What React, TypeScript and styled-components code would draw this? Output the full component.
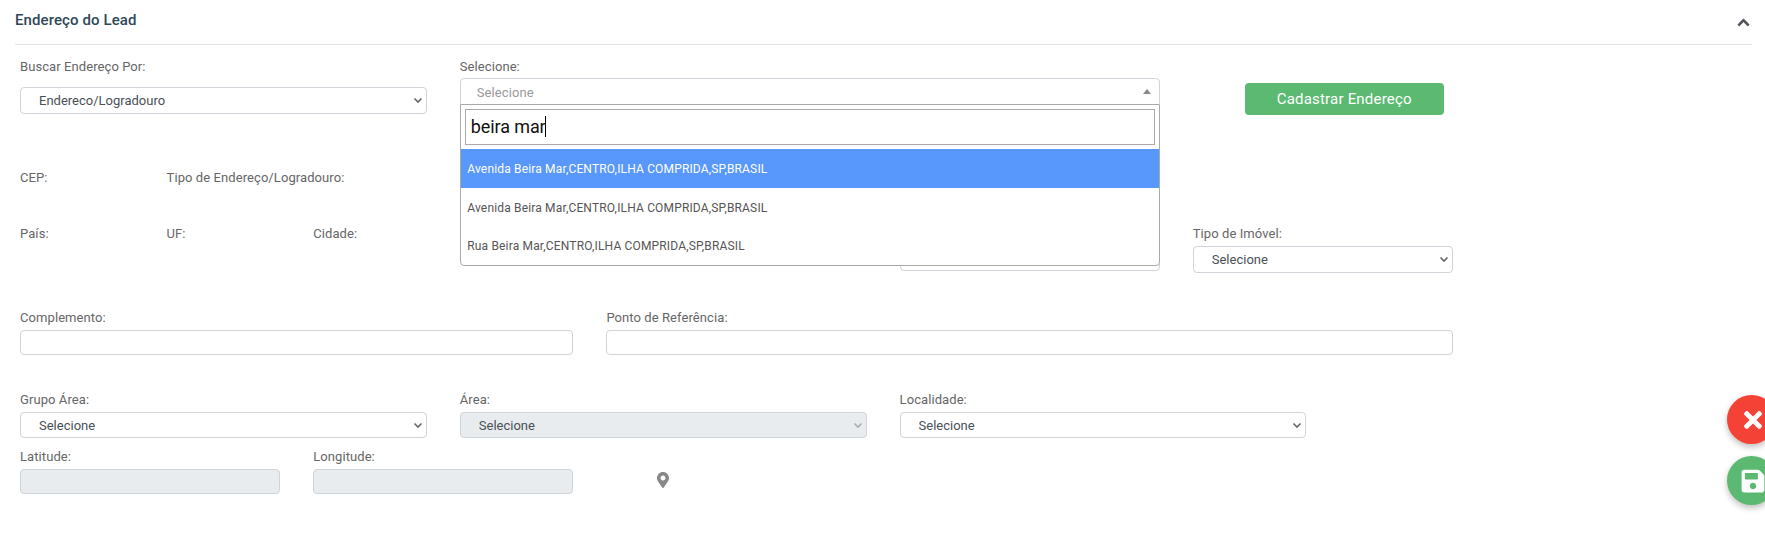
import React from 'react';
import styled, { createGlobalStyle } from 'styled-components';
import { FaChevronUp, FaMapMarkerAlt, FaSave, FaTimes } from 'react-icons/fa';

const chevron = (color: string) =>
  `url("data:image/svg+xml,%3Csvg xmlns='http://www.w3.org/2000/svg' viewBox='0 0 10 7'%3E%3Cpath d='M1.5 1.5l3.5 3.5 3.5-3.5' fill='none' stroke='${color}' stroke-width='1.6'/%3E%3C/svg%3E")`;

const GlobalStyle = createGlobalStyle`
  html, body {
    margin: 0;
    height: 100%;
    overflow: hidden;
    background: #fff;
  }
  body {
    font-family: Roboto, "Liberation Sans", sans-serif;
    font-size: 13px;
    color: #555;
  }
`;

const Section = styled('section')`
  padding: 0 13px 0 15px;
`;

const SectionHeader = styled('header')`
  display: flex;
  align-items: center;
  justify-content: space-between;
  height: 44px;
  padding: 0 2px 0 0;
  border-bottom: 1px solid #dee2e6;
  color: #2f4858;
`;

const SectionTitle = styled('h3')`
  margin: 0 0 5px;
  font-size: 15px;
  line-height: 20px;
  font-weight: 500;
  letter-spacing: 0.1px;
`;

const Collapse = styled('span')`
  display: flex;
  color: #495057;
  font-size: 13px;

  svg {
    stroke: currentColor;
    stroke-width: 30px;
  }
`;

const Row = styled('div')<{ $top: number }>`
  display: grid;
  grid-template-columns: repeat(10, 113.6px);
  column-gap: 33px;
  align-items: start;
  margin: ${(p) => p.$top}px 0 0 5px;
`;

const Field = styled('div')<{ $start: number; $span: number }>`
  grid-column: ${(p) => p.$start} / span ${(p) => p.$span};
  display: flex;
  flex-direction: column;
  min-width: 0;
`;

const Label = styled('label')<{ $gap?: number }>`
  display: block;
  min-height: 15px;
  margin-bottom: ${(p) => p.$gap ?? 5}px;
  font-size: 13px;
  line-height: 15px;
  letter-spacing: 0.08px;
  color: #666;
`;

const Select = styled('select')<{ $height: number }>`
  box-sizing: border-box;
  appearance: none;
  width: 100%;
  height: ${(p) => p.$height}px;
  padding: 0 18px;
  border: 1px solid #ced4da;
  border-radius: 4px;
  background: #fff ${chevron('%23666')} no-repeat right 3px center / 10px 7px;
  color: #495057;
  font-family: inherit;
  font-size: 13px;

  &:disabled {
    background: #e9ecef ${chevron('%23aaa')} no-repeat right 3px center / 10px 7px;
    opacity: 1;
  }
`;

const Input = styled('input')<{ $height?: number }>`
  box-sizing: border-box;
  width: 100%;
  height: ${(p) => p.$height ?? 25}px;
  padding: 0 12px;
  border: 1px solid #ced4da;
  border-radius: 4px;
  background: #fff;

  &:disabled {
    background: #e9ecef;
  }
`;

const ComboWrap = styled('div')`
  position: relative;
`;

const ComboSelection = styled('div')`
  box-sizing: border-box;
  display: flex;
  align-items: center;
  justify-content: space-between;
  height: 27px;
  padding: 2px 8px 0 16px;
  border: 1px solid #ced4da;
  border-radius: 4px 4px 0 0;
  color: #999;
  letter-spacing: 0.08px;
`;

const ComboArrow = styled('span')`
  width: 0;
  height: 0;
  margin-bottom: 2px;
  border-left: 4px solid transparent;
  border-right: 4px solid transparent;
  border-bottom: 5px solid #888;
`;

const ComboPanel = styled('div')`
  position: absolute;
  top: 26px;
  left: 0;
  right: 0;
  z-index: 5;
  box-sizing: border-box;
  height: 162px;
  border: 1px solid #aaa;
  border-radius: 0 0 4px 4px;
  background: #fff;
`;

const ComboSearchWrap = styled('div')`
  padding: 4px;
`;

const ComboSearch = styled('div')`
  box-sizing: border-box;
  display: flex;
  align-items: center;
  height: 36px;
  padding: 0 5px 2px;
  border: 1px solid #aaa;
  color: #111;
  font-size: 18px;
  letter-spacing: -0.1px;
`;

const Caret = styled('span')`
  width: 1px;
  height: 21px;
  margin-left: -1px;
  background: #000;
`;

const ComboOption = styled('div')<{ $active?: boolean }>`
  padding: 13px 6.5px 10.5px;
  font-size: 12px;
  line-height: 15px;
  letter-spacing: 0.16px;
  background: ${(p) => (p.$active ? '#5897fb' : 'transparent')};
  color: ${(p) => (p.$active ? '#fff' : '#555')};
`;

const SaveAddressButton = styled('button')`
  grid-column: 9 / span 2;
  box-sizing: border-box;
  width: 199px;
  height: 32px;
  margin: 24px 0 0 52px;
  border: none;
  border-radius: 4px;
  background: #5cb971;
  color: #fff;
  font-family: inherit;
  font-size: 15px;
  font-weight: 400;
  letter-spacing: 0.2px;
`;

const PinCell = styled('div')`
  grid-column: 5 / span 1;
  display: flex;
  justify-content: center;
  padding-top: 23px;
  color: #888;
  font-size: 16px;
`;

const FabStack = styled('div')`
  position: fixed;
  right: -11px;
  top: 395px;
  display: flex;
  flex-direction: column;
  gap: 12px;
`;

const Fab = styled('button')<{ $color: string; $size: number }>`
  display: flex;
  align-items: center;
  justify-content: center;
  width: 49px;
  height: 49px;
  padding: 0 0 0 3px;
  border: none;
  border-radius: 50%;
  background: ${(p) => p.$color};
  box-shadow: 0 3px 6px rgba(0, 0, 0, 0.25);
  color: #fff;
  font-size: ${(p) => p.$size}px;
`;

const options = [
  'Avenida Beira Mar,CENTRO,ILHA COMPRIDA,SP,BRASIL',
  'Avenida Beira Mar,CENTRO,ILHA COMPRIDA,SP,BRASIL',
  'Rua Beira Mar,CENTRO,ILHA COMPRIDA,SP,BRASIL',
];

const SelectOne = ({ value, height, disabled }: { value: string; height: number; disabled?: boolean }) => (
  <Select $height={height} disabled={disabled} defaultValue={value}>
    <option>{value}</option>
  </Select>
);

export default function App() {
  return (
    <>
      <GlobalStyle />
      <Section>
        <SectionHeader>
          <SectionTitle>Endereço do Lead</SectionTitle>
          <Collapse>
            <FaChevronUp />
          </Collapse>
        </SectionHeader>

        <Row $top={14}>
          <Field $start={1} $span={3}>
            <Label $gap={13}>Buscar Endereço Por:</Label>
            <SelectOne value="Endereco/Logradouro" height={27} />
          </Field>
          <Field $start={4} $span={5}>
            <Label $gap={4}>Selecione:</Label>
            <ComboWrap>
              <ComboSelection>
                Selecione
                <ComboArrow />
              </ComboSelection>
              <ComboPanel>
                <ComboSearchWrap>
                  <ComboSearch>
                    beira mar
                    <Caret />
                  </ComboSearch>
                </ComboSearchWrap>
                {options.map((text, i) => (
                  <ComboOption key={i} $active={i === 0}>
                    {text}
                  </ComboOption>
                ))}
              </ComboPanel>
            </ComboWrap>
          </Field>
          <SaveAddressButton>Cadastrar Endereço</SaveAddressButton>
        </Row>

        <Row $top={55}>
          <Field $start={1} $span={1}>
            <Label $gap={0}>CEP:</Label>
          </Field>
          <Field $start={2} $span={3}>
            <Label $gap={0}>Tipo de Endereço/Logradouro:</Label>
          </Field>
        </Row>

        <Row $top={41}>
          <Field $start={1} $span={1}>
            <Label>País:</Label>
          </Field>
          <Field $start={2} $span={1}>
            <Label>UF:</Label>
          </Field>
          <Field $start={3} $span={1}>
            <Label>Cidade:</Label>
          </Field>
          <Field $start={7} $span={2}>
            <Label $gap={6} />
            <Input $height={24} />
          </Field>
          <Field $start={9} $span={2}>
            <Label>Tipo de Imóvel:</Label>
            <SelectOne value="Selecione" height={27} />
          </Field>
        </Row>

        <Row $top={37}>
          <Field $start={1} $span={4}>
            <Label>Complemento:</Label>
            <Input />
          </Field>
          <Field $start={5} $span={6}>
            <Label>Ponto de Referência:</Label>
            <Input />
          </Field>
        </Row>

        <Row $top={37}>
          <Field $start={1} $span={3}>
            <Label>Grupo Área:</Label>
            <SelectOne value="Selecione" height={26} />
          </Field>
          <Field $start={4} $span={3}>
            <Label>Área:</Label>
            <SelectOne value="Selecione" height={26} disabled />
          </Field>
          <Field $start={7} $span={3}>
            <Label>Localidade:</Label>
            <SelectOne value="Selecione" height={26} />
          </Field>
        </Row>

        <Row $top={11}>
          <Field $start={1} $span={2}>
            <Label>Latitude:</Label>
            <Input disabled />
          </Field>
          <Field $start={3} $span={2}>
            <Label>Longitude:</Label>
            <Input disabled />
          </Field>
          <PinCell>
            <FaMapMarkerAlt />
          </PinCell>
        </Row>
      </Section>

      <FabStack>
        <Fab $color="#f44336" $size={26}>
          <FaTimes />
        </Fab>
        <Fab $color="#5cb971" $size={26}>
          <FaSave />
        </Fab>
      </FabStack>
    </>
  );
}
